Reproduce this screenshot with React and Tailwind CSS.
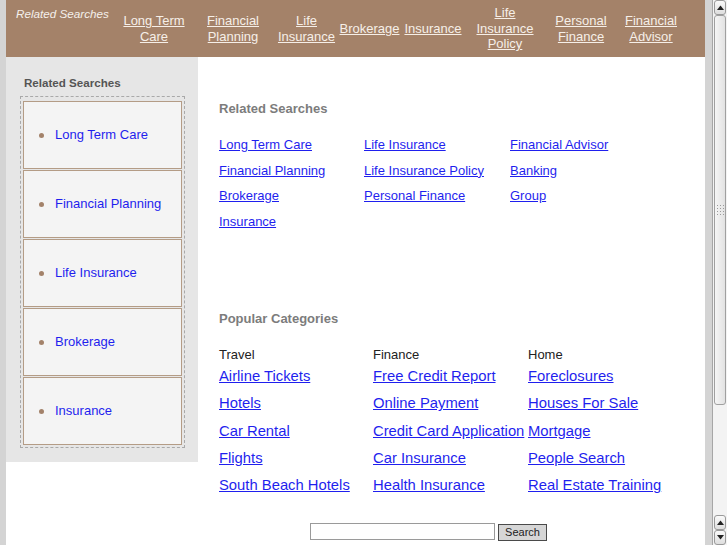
import React from "react";

const headerLinks = [
  { w: "w-[72px]", lines: ["Long Term", "Care"] },
  { w: "w-[86px]", lines: ["Financial", "Planning"] },
  { w: "w-[61px]", lines: ["Life", "Insurance"] },
  { w: "w-[65px]", lines: ["Brokerage"] },
  { w: "w-[62px]", lines: ["Insurance"] },
  { w: "w-[82px]", lines: ["Life", "Insurance", "Policy"] },
  { w: "w-[70px]", lines: ["Personal", "Finance"] },
  { w: "w-[70px]", lines: ["Financial", "Advisor"] },
];

const sideItems = ["Long Term Care", "Financial Planning", "Life Insurance", "Brokerage", "Insurance"];

const related = [
  "Long Term Care", "Life Insurance", "Financial Advisor",
  "Financial Planning", "Life Insurance Policy", "Banking",
  "Brokerage", "Personal Finance", "Group",
  "Insurance",
];

const categories = [
  { title: "Travel", links: ["Airline Tickets", "Hotels", "Car Rental", "Flights", "South Beach Hotels"] },
  { title: "Finance", links: ["Free Credit Report", "Online Payment", "Credit Card Application", "Car Insurance", "Health Insurance"] },
  { title: "Home", links: ["Foreclosures", "Houses For Sale", "Mortgage", "People Search", "Real Estate Training"] },
];

function Arrow({ down }) {
  return (
    <svg width="7" height="5" viewBox="0 0 7 5">
      {down ? <polygon points="0,0 7,0 3.5,4.5" fill="#222" /> : <polygon points="0,5 7,5 3.5,0.5" fill="#222" />}
    </svg>
  );
}

function ScrollBtn({ down }) {
  return (
    <div className="h-[15px] mx-[1px] flex items-center justify-center rounded-[3px] border border-[#9a9a9a] bg-gradient-to-b from-[#fafafa] to-[#dedede]">
      <Arrow down={down} />
    </div>
  );
}

export default function App() {
  return (
    <div className="w-[727px] h-[545px] flex overflow-hidden bg-[#d4d4d4] font-['Liberation_Sans',Arial,sans-serif]">
      <div className="w-[712px] h-full pl-[6px] pr-[7px]">
        <div className="w-[699px] h-full bg-white flex flex-col">
          {/* Header */}
          <div className="h-[57px] bg-[#a48269] flex shrink-0">
            <div className="w-[112px] pl-[10px] pt-[7px] text-[11.7px] leading-[14px] italic text-[#f4f0ec]">
              Related Searches
            </div>
            {headerLinks.map((l, i) => (
              <div key={i} className={`${l.w} flex items-center justify-center text-center text-[13px] leading-[15.5px]`}>
                <a href="#" className="text-[#f6efe8] underline">
                  {l.lines.map((ln, j) => (
                    <React.Fragment key={j}>
                      {j > 0 && <br />}
                      {ln}
                    </React.Fragment>
                  ))}
                </a>
              </div>
            ))}
          </div>

          {/* Body */}
          <div className="flex flex-1">
            {/* Sidebar */}
            <div className="w-[192px] self-start bg-[#e6e6e6] pt-[19px] pb-[14px]">
              <div className="pl-[18px] text-[11.6px] leading-[14px] font-bold text-[#555]">Related Searches</div>
              <div className="ml-[14px] mt-[6px] w-[165px] border border-dashed border-[#a9a9a9] px-[2px] pt-[4px] pb-[2px] flex flex-col gap-[1px]">
                {sideItems.map((s) => (
                  <div key={s} className="h-[68px] border border-[#b49c86] bg-[#f4f4f4] flex items-center">
                    <span className="ml-[15px] w-[5px] h-[5px] rounded-full bg-[#a3826a]" />
                    <a href="#" className="ml-[11px] text-[13px] text-[#1f1fee]">{s}</a>
                  </div>
                ))}
              </div>
            </div>

            {/* Main */}
            <div className="flex-1 pt-[44px] pl-[21px]">
              <div className="text-[13px] leading-[16px] font-bold text-[#7c7c7c]">Related Searches</div>
              <div className="mt-[15px] w-[436px] grid grid-cols-[145px_146px_1fr] auto-rows-[25.5px]">
                {related.map((r) => (
                  <div key={r} className="text-[13px] leading-[25.5px]">
                    <a href="#" className="text-[#1f1fee] underline">{r}</a>
                  </div>
                ))}
              </div>

              <div className="mt-[77px] text-[13px] leading-[16px] font-bold text-[#7c7c7c]">Popular Categories</div>
              <div className="mt-[20px] w-[464px] grid grid-cols-[154px_155px_1fr]">
                {categories.map((c) => (
                  <div key={c.title} className="flex flex-col">
                    <div className="text-[13px] leading-[16px] text-[#222]">{c.title}</div>
                    {c.links.map((l) => (
                      <div key={l} className="h-[27.25px] text-[14.8px] leading-[27.25px] whitespace-nowrap">
                        <a href="#" className="text-[#1f1fee] underline">{l}</a>
                      </div>
                    ))}
                  </div>
                ))}
              </div>

              <div className="mt-[24px] pl-[91px] flex items-start gap-[3px]">
                <input type="text" className="w-[185px] h-[17px] border border-[#9a9a9a] bg-white outline-none" />
                <button className="mt-[1px] w-[49px] h-[17px] border border-[#4a4a4a] bg-[#d6d6d6] text-[11px] leading-[13px] pb-[1px] text-[#222] font-['Liberation_Sans',Arial,sans-serif]">
                  Search
                </button>
              </div>
            </div>
          </div>
        </div>
      </div>

      {/* Scrollbar */}
      <div className="w-[15px] h-full border-l border-[#a6a6a6] bg-[#f3f3f3] flex flex-col">
        <ScrollBtn />
        <div className="h-[390px] mx-[1px] rounded-[3px] border border-[#a0a0a0] bg-gradient-to-r from-[#f6f6f6] to-[#e2e2e2] flex items-center justify-center">
          <svg width="9" height="12" viewBox="0 0 9 12">
            {[0, 3, 6, 9].map((y) =>
              [0, 3, 6].map((x) => <rect key={`${x}-${y}`} x={x + 1} y={y + 1} width="1" height="1" fill="#9a9a9a" />)
            )}
          </svg>
        </div>
        <div className="flex-1" />
        <ScrollBtn />
        <ScrollBtn down />
      </div>
    </div>
  );
}
